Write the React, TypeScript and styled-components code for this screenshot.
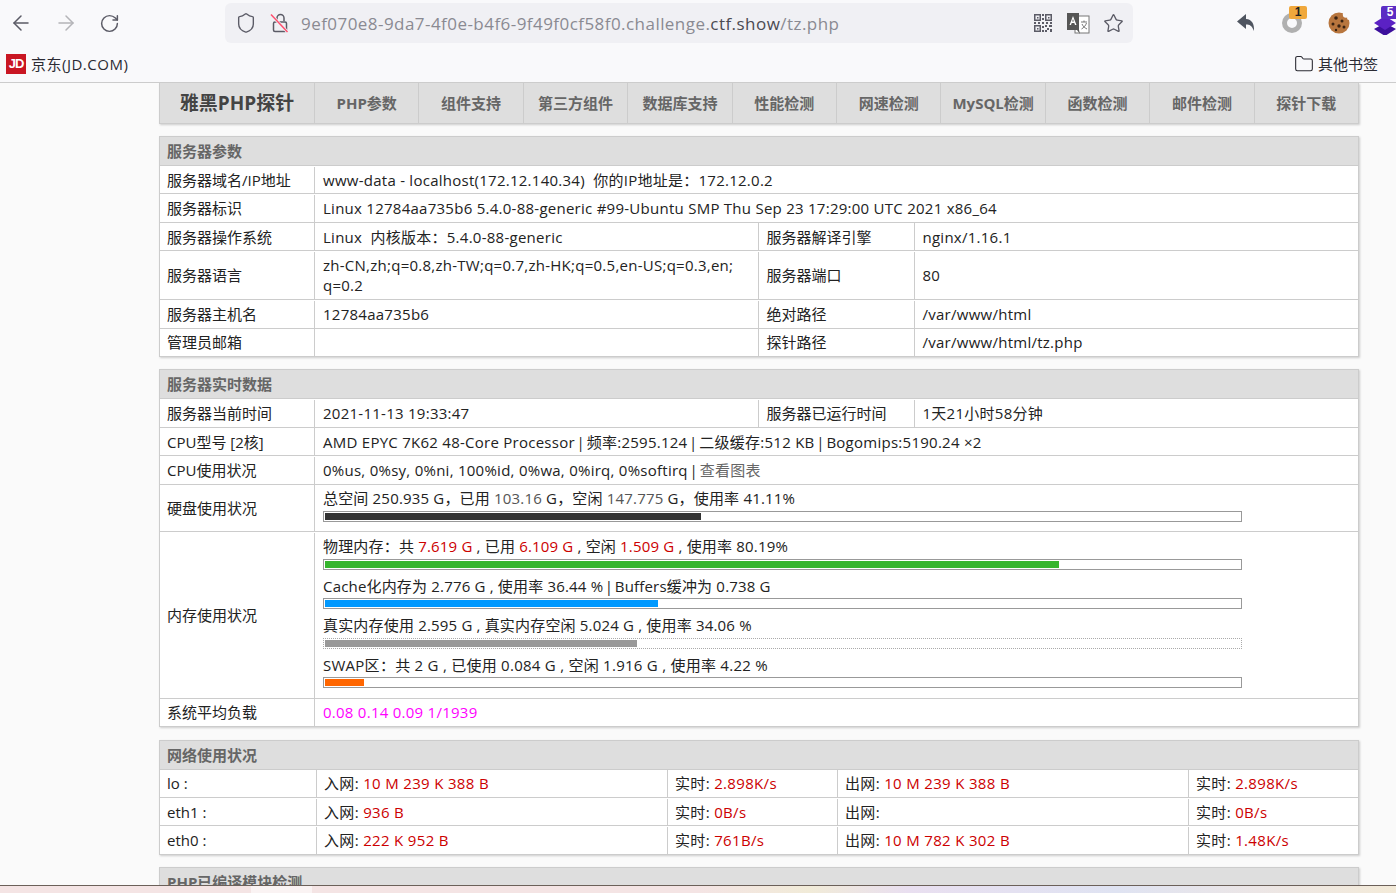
import React from 'react';
import styled, { createGlobalStyle } from 'styled-components';
import { ArrowLeft, ArrowRight, RotateCw, Shield, Star, Folder } from 'lucide-react';

const Global = createGlobalStyle`
  html, body { margin: 0; padding: 0; height: 100%; overflow: hidden; }
  body { font-family: "Open Sans", "Noto Sans CJK SC", sans-serif; background: #fafafa; }
  #root { height: 893px; overflow: hidden; display: flex; flex-direction: column; }
`;

const Chrome = styled.header`
  flex: none; height: 83px; background: #f9f9fb; border-bottom: 1px solid #ccc; box-sizing: border-box;
  display: flex; flex-direction: column; position: relative; z-index: 2;
`;
const Toolbar = styled.div`height: 46px; display: flex; align-items: center; padding: 0 0 0 9px; flex: none;`;
const NavBtn = styled.span<{ $w: number }>`width: ${p => p.$w}px; flex: none; display: flex; align-items: center; color: #5b5b66;`;
const UrlBar = styled.div`
  width: 908px; height: 40px; margin-left: 81px; border-radius: 6px; background: #f0f0f4; flex: none;
  display: flex; align-items: center; padding-left: 10px; box-sizing: border-box; color: #5b5b66;
  font-family: "Open Sans", sans-serif; font-size: 17px;
`;
const ShieldGap = styled.span`width: 13px; flex: none;`;
const Url = styled.span`margin-left: 11px; color: #8a8a92; white-space: nowrap; letter-spacing: .45px;`;
const UrlStrong = styled.span`color: #4a4a52;`;
const UrlTools = styled.span`margin-left: auto; display: flex; align-items: center; gap: 13px; padding-right: 9px;`;
const ExtTools = styled.div`margin-left: 102px; display: flex; align-items: center; gap: 22px; flex: none;`;
const ExtIcon = styled.span`position: relative; width: 24px; height: 24px; display: block; flex: none;`;
const Badge = styled.span<{ $bg: string; $fg: string }>`
  position: absolute; top: -5px; right: -2px; width: 18px; height: 13px; border-radius: 2px;
  background: ${p => p.$bg}; color: ${p => p.$fg}; font: bold 12px/13px "Liberation Sans", sans-serif; text-align: center;
`;
const Bookmarks = styled.div`
  height: 35px; display: flex; align-items: center; padding: 0 18px 0 6px; font-size: 15px; color: #2b2b33;
`;
const BookmarkName = styled.span`letter-spacing: .5px;`;
const JdLogo = styled.span`
  width: 20px; height: 20px; background: #c91623; color: #fff; flex: none; margin-right: 5px;
  font: bold 13px/20px "Liberation Sans Narrow", "Liberation Sans", sans-serif; text-align: center; letter-spacing: -1px;
`;
const OtherMarks = styled.span`margin-left: auto; display: flex; align-items: center; gap: 4px;`;

const Page = styled.main`flex: 1; min-height: 0; overflow: hidden; font-size: 15px; color: #222;`;
const Wrap = styled.div`width: 1200px; margin-left: 159px;`;

const Nav = styled.nav`
  height: 41px; display: flex; background: #dedede; box-sizing: border-box; width: 1200px;
  border: 1px solid #ccc; border-top: 0; box-shadow: 1px 1px 2px #ccc; margin-bottom: 12px;
`;
const Brand = styled.a`
  width: 155px; flex: none; box-sizing: border-box; text-align: center; line-height: 41px;
  font-size: 19px; font-weight: bold; color: #444; border-right: 1px solid #ccc;
`;
const NavItem = styled.a`
  flex: 1; text-align: center; line-height: 41px; font-size: 15px; font-weight: bold; color: #666; white-space: nowrap;
  border-right: 1px solid #ccc; &:last-child { border-right: 0; }
`;

const Section = styled.section`
  width: 1200px; background: #fff; border: 1px solid #ccc; box-sizing: border-box;
  box-shadow: 1px 1px 2px #ccc; margin-bottom: 12.5px;
`;
const Head = styled.h2`
  margin: 0; height: 28px; background: #dedede; font-size: 15px; font-weight: bold; color: #666;
  line-height: 29px; padding-left: 7px;
`;
const Row = styled.div<{ $h?: number }>`
  display: flex; height: ${p => p.$h ?? 28.4}px; border-top: 1px solid #ccc; box-sizing: border-box; padding-top: .6px;
`;
const Label = styled.div<{ $w: number }>`
  width: ${p => p.$w}px; flex: none; box-sizing: border-box; display: flex; flex-direction: column; justify-content: center;
  padding: 0 8px 0 8px; line-height: 20.5px; color: #222; border-left: 1px solid #ccc; white-space: pre-wrap;
  &:first-child { border-left: 0; padding-left: 7px; }
`;
const Value = styled.div<{ $w?: number; $pb?: number; $pl?: number; $ls?: number }>`
  ${p => (p.$w ? `width: ${p.$w}px; flex: none;` : 'flex: 1;')}
  box-sizing: border-box; display: flex; flex-direction: column; justify-content: center;
  padding: 0 0 ${p => p.$pb ?? 0}px ${p => p.$pl ?? 8}px; line-height: 20.5px; color: #222; border-left: 1px solid #ccc;
  white-space: pre-wrap; letter-spacing: ${p => p.$ls ?? 0.26}px;
`;
const Line = styled.span<{ $ls?: number }>`letter-spacing: ${p => p.$ls ?? 0.18}px;`;
const Pipe = styled.span`margin: 0 -2.5px;`;
const Red = styled.span`color: #cc0000;`;
const Dim = styled.span`color: #555;`;
const Pink = styled.span`color: #ff00ff;`;
const Gray = styled.a`color: #666;`;

const Meter = styled.div<{ $dotted?: boolean }>`
  width: 919px; height: 11px; box-sizing: border-box; padding: 1px; margin-top: 2px; background: #fff;
  border: 1px ${p => (p.$dotted ? 'dotted #aaa' : 'solid #999')};
`;
const Fill = styled.div<{ $c: string }>`height: 100%; background: ${p => p.$c};`;
const Group = styled.div`margin-bottom: 6px; &:last-child { margin-bottom: 0; }`;

const Bottom = styled.div`
  flex: none; height: 8px; box-sizing: border-box; border-top: 1px solid #6b6059; display: flex;
  background: linear-gradient(90deg, #f4e4e4 0%, #f4e4e4 50%, #f1ebd8 58%, #e9dff0 65%, #dfe3f2 80%, #ece6e6 90%, #f3ead8 100%);
`;
const BottomTab = styled.span`margin-left: 251px; width: 61px; background: #faf3f3;`;

const C1 = 154, C2 = 443.5, C3 = 156;
const NC = [156, 351, 170, 351];

const Bar = ({ pct, color, dotted }: { pct: number; color: string; dotted?: boolean }) => (
  <Meter $dotted={dotted}><Fill $c={color} style={{ width: `${pct}%` }} /></Meter>
);

const QrIcon = () => (
  <svg width="20" height="20" viewBox="0 0 20 20" fill="#5b5b66">
    <path fillRule="evenodd" d="M1 1h7v7H1zM2.500 2.500v4h4v-4zM12 1h7v7h-7zM13.500 2.500v4h4v-4zM1 12h7v7H1zM2.500 13.500v4h4v-4z" />
    <path d="M4 4h1.500v1.500H4zM15 4h1.500v1.500H15zM4 15h1.500v1.500H4zM9 1h2v2H9zM9 5h2v2H9zM1 9h2v2H1zM5 9h2v2H5zM9 9h2v2H9zM13 9h2v2h-2zM17 9h2v2h-2zM9 13h2v2H9zM12 12h2v2h-2zM16 12h3v2h-3zM14 15h2v2h-2zM9 17h2v2H9zM12 17h2v2h-2zM17 16h2v3h-2z" />
  </svg>
);
const TranslateIcon = () => (
  <svg width="24" height="24" viewBox="0 0 24 24">
    <rect x="9" y="5" width="14" height="17" fill="#fff" stroke="#777" strokeWidth="1" />
    <path d="M1 2h12v17H1z" fill="#555" />
    <path d="M11 19l3 4 -1-4z" fill="#555" />
    <path d="M7 5l3.500 9H9l-.7-2H5.700L5 14H3.500zM6.200 10.500h1.600L7 8z" fill="#fff" />
    <path d="M15 11h6M18 9.500v1.500M16 13c1 2.500 3 4 5 5M20.500 12c-.8 2.500-2.500 4.500-5 6" fill="none" stroke="#777" strokeWidth="1" />
  </svg>
);
const LockSlash = () => (
  <svg width="20" height="22" viewBox="0 0 20 22" fill="none" stroke="#5b5b66" strokeWidth="1.500">
    <path d="M7 9V6a3.500 3.500 0 0 1 7 0v3" />
    <rect x="3.500" y="10" width="13" height="9.500" rx="1.500" />
    <path d="M1 2.500L17.500 20" stroke="#f0f0f4" strokeWidth="3" />
    <path d="M1 2.500L17.500 20" stroke="#ff4f6e" strokeWidth="1.500" />
  </svg>
);
const ReplyIcon = () => (
  <svg width="24" height="24" viewBox="0 0 24 24" fill="#4f5560">
    <path d="M11 3L2 10.500l9 7.500v-4.500c3.500 0 6 1 8 6.500 .5-7-2-11.500-8-12z" />
  </svg>
);
const RingIcon = () => (
  <svg width="24" height="24" viewBox="0 0 24 24" fill="none">
    <circle cx="11" cy="12" r="7.500" stroke="#b0b0b0" strokeWidth="5" />
  </svg>
);
const CookieIcon = () => (
  <svg width="24" height="24" viewBox="0 0 24 24">
    <circle cx="12" cy="12" r="10.500" fill="#b8763e" />
    <circle cx="19" cy="3.500" r="3.200" fill="#f9f9fb" />
    <circle cx="22" cy="7" r="2" fill="#f9f9fb" />
    <g fill="#3a2312">
      <circle cx="9" cy="7" r="1.800" /><circle cx="15" cy="10" r="1.500" /><circle cx="6" cy="13" r="1.500" />
      <circle cx="12" cy="15" r="1.700" /><circle cx="17" cy="16" r="1.500" /><circle cx="9" cy="19" r="1.200" />
    </g>
  </svg>
);
const LayersIcon = () => (
  <svg width="24" height="24" viewBox="0 0 24 24">
    <path d="M12 12l11 6-11 7L1 18z" fill="#3c0f9c" />
    <path d="M12 5l11 7-11 7L1 12z" fill="#5b21c4" />
  </svg>
);

const navItems = ['PHP参数', '组件支持', '第三方组件', '数据库支持', '性能检测', '网速检测', 'MySQL检测', '函数检测', '邮件检测', '探针下载'];

const netRows = [
  { name: 'lo :', inn: '10 M 239 K 388 B', r1: '2.898K/s', out: '10 M 239 K 388 B', r2: '2.898K/s' },
  { name: 'eth1 :', inn: '936 B', r1: '0B/s', out: '', r2: '0B/s' },
  { name: 'eth0 :', inn: '222 K 952 B', r1: '761B/s', out: '10 M 782 K 302 B', r2: '1.48K/s' },
];

export default function App() {
  return (
    <>
      <Global />
      <Chrome>
        <Toolbar>
          <NavBtn $w={45}><ArrowLeft size={24} strokeWidth={1.5} /></NavBtn>
          <NavBtn $w={45}><ArrowRight size={24} strokeWidth={1.5} color="#b4b4b8" /></NavBtn>
          <NavBtn $w={45}><RotateCw size={21} strokeWidth={1.7} /></NavBtn>
          <UrlBar>
            <Shield size={22} strokeWidth={1.5} />
            <ShieldGap />
            <LockSlash />
            <Url>9ef070e8-9da7-4f0e-b4f6-9f49f0cf58f0.challenge.<UrlStrong>ctf.show</UrlStrong>/tz.php</Url>
            <UrlTools>
              <QrIcon />
              <TranslateIcon />
              <Star size={21} strokeWidth={1.5} />
            </UrlTools>
          </UrlBar>
          <ExtTools>
            <ExtIcon><ReplyIcon /></ExtIcon>
            <ExtIcon><RingIcon /><Badge $bg="#f0a83c" $fg="#222">1</Badge></ExtIcon>
            <ExtIcon><CookieIcon /></ExtIcon>
            <ExtIcon><LayersIcon /><Badge $bg="#5b2cc4" $fg="#fff">5</Badge></ExtIcon>
          </ExtTools>
        </Toolbar>
        <Bookmarks>
          <JdLogo>JD</JdLogo><BookmarkName>京东(JD.COM)</BookmarkName>
          <OtherMarks><Folder size={20} strokeWidth={1.3} />其他书签</OtherMarks>
        </Bookmarks>
      </Chrome>
      <Page>
        <Wrap>
          <Nav>
            <Brand>雅黑PHP探针</Brand>
            {navItems.map(n => <NavItem key={n}>{n}</NavItem>)}
          </Nav>

          <Section>
            <Head>服务器参数</Head>
            <Row><Label $w={C1}>服务器域名/IP地址</Label><Value>www-data - localhost(172.12.140.34)  你的IP地址是：172.12.0.2</Value></Row>
            <Row><Label $w={C1}>服务器标识</Label><Value>Linux 12784aa735b6 5.4.0-88-generic #99-Ubuntu SMP Thu Sep 23 17:29:00 UTC 2021 x86_64</Value></Row>
            <Row><Label $w={C1}>服务器操作系统</Label><Value $w={C2}>Linux  内核版本：5.4.0-88-generic</Value><Label $w={C3}>服务器解译引擎</Label><Value>nginx/1.16.1</Value></Row>
            <Row $h={49}><Label $w={C1}>服务器语言</Label><Value $w={C2}><span>zh-CN,zh;q=0.8,zh-TW;q=0.7,zh-HK;q=0.5,en-US;q=0.3,en;<br />q=0.2</span></Value><Label $w={C3}>服务器端口</Label><Value>80</Value></Row>
            <Row><Label $w={C1}>服务器主机名</Label><Value $w={C2}>12784aa735b6</Value><Label $w={C3}>绝对路径</Label><Value>/var/www/html</Value></Row>
            <Row><Label $w={C1}>管理员邮箱</Label><Value $w={C2} /><Label $w={C3}>探针路径</Label><Value>/var/www/html/tz.php</Value></Row>
          </Section>

          <Section>
            <Head>服务器实时数据</Head>
            <Row><Label $w={C1}>服务器当前时间</Label><Value $w={C2}>2021-11-13 19:33:47</Value><Label $w={C3}>服务器已运行时间</Label><Value>1天21小时58分钟</Value></Row>
            <Row><Label $w={C1}>CPU型号 [2核]</Label><Value><span>AMD EPYC 7K62 48-Core Processor <Pipe>|</Pipe> 频率:2595.124 <Pipe>|</Pipe> 二级缓存:512 KB <Pipe>|</Pipe> Bogomips:5190.24 ×2</span></Value></Row>
            <Row><Label $w={C1}>CPU使用状况</Label><Value><span>0%us, 0%sy, 0%ni, 100%id, 0%wa, 0%irq, 0%softirq <Pipe>|</Pipe> <Gray>查看图表</Gray></span></Value></Row>
            <Row $h={47.5}><Label $w={C1}>硬盘使用状况</Label><Value $pb={6}>
              <Line>总空间 250.935 G，已用 <Dim>103.16</Dim> G，空闲 <Dim>147.775</Dim> G，使用率 41.11%</Line>
              <Bar pct={41.11} color="#333" />
            </Value></Row>
            <Row $h={166.5}><Label $w={C1}>内存使用状况</Label><Value $pb={5.4}>
              <Group>
                <Line>物理内存：共 <Red>7.619 G</Red> , 已用 <Red>6.109 G</Red> , 空闲 <Red>1.509 G</Red> , 使用率 80.19%</Line>
                <Bar pct={80.19} color="#36b52e" />
              </Group>
              <Group>
                <Line>Cache化内存为 2.776 G , 使用率 36.44 % <Pipe>|</Pipe> Buffers缓冲为 0.738 G</Line>
                <Bar pct={36.44} color="#0099ff" />
              </Group>
              <Group>
                <Line>真实内存使用 2.595 G , 真实内存空闲 5.024 G , 使用率 34.06 %</Line>
                <Bar pct={34.06} color="#999" dotted />
              </Group>
              <Group>
                <Line $ls={0.26}>SWAP区：共 2 G , 已使用 0.084 G , 空闲 1.916 G , 使用率 4.22 %</Line>
                <Bar pct={4.22} color="#ff6600" />
              </Group>
            </Value></Row>
            <Row><Label $w={C1}>系统平均负载</Label><Value><Pink>0.08 0.14 0.09 1/1939</Pink></Value></Row>
          </Section>

          <Section>
            <Head>网络使用状况</Head>
            {netRows.map(r => (
              <Row key={r.name}>
                <Label $w={NC[0]}>{r.name}</Label>
                <Value $w={NC[1]} $ls={0.33} $pl={7}><span>入网: <Red>{r.inn}</Red></span></Value>
                <Value $w={NC[2]} $ls={0.33} $pl={7}><span>实时: <Red>{r.r1}</Red></span></Value>
                <Value $w={NC[3]} $ls={0.33} $pl={7}><span>出网: <Red>{r.out}</Red></span></Value>
                <Value $ls={0.33} $pl={7}><span>实时: <Red>{r.r2}</Red></span></Value>
              </Row>
            ))}
          </Section>

          <Section>
            <Head>PHP已编译模块检测</Head>
          </Section>
        </Wrap>
      </Page>
      <Bottom><BottomTab /></Bottom>
    </>
  );
}
